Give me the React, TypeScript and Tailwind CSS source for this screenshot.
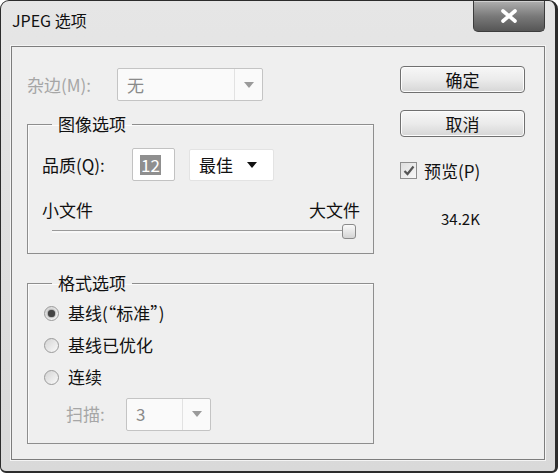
import React from "react";

const font = { fontFamily: '"Noto Sans CJK SC", "Noto Sans", sans-serif' };

function Caret({ gray }: { gray?: boolean }) {
  return (
    <svg width="10" height="6" viewBox="0 0 10 6">
      <path d="M0 0 L10 0 L5 6 Z" fill={gray ? "#9a9a9a" : "#111"} />
    </svg>
  );
}

function DisabledSelect({ value, width, divider }: { value: string; width: string; divider: string }) {
  return (
    <div className={`flex h-[33px] ${width} items-center rounded-[2px] border border-[#c4c4c4] bg-[#fafafa] text-[17px] text-[#8a8a8a]`}>
      <span className={`${divider} pl-[9px]`}>{value}</span>
      <div className="flex h-full flex-1 items-center justify-center border-l border-[#e2e2e2]">
        <Caret gray />
      </div>
    </div>
  );
}

function Radio({ checked, label }: { checked?: boolean; label: string }) {
  return (
    <div className="flex h-[32px] items-center">
      <div className="ml-[16px] flex h-[15px] w-[15px] items-center justify-center rounded-full border border-[#9a9a9a] bg-gradient-to-br from-[#d4d4d4] to-[#fafafa]">
        {checked && <div className="h-[7px] w-[7px] rounded-full bg-[#444] shadow-[0_0_2px_#222]" />}
      </div>
      <span className="ml-[9px] text-[17px] text-[#111]">{label}</span>
    </div>
  );
}

function Btn({ label }: { label: string }) {
  return (
    <button className="flex h-[27px] w-[125px] items-center justify-center rounded-[4px] border border-[#707070] bg-gradient-to-b from-[#f7f7f7] via-[#ebebeb] to-[#d6d6d6] text-[17px] text-[#111] shadow-[inset_0_0_0_1px_#fcfcfc]">
      {label}
    </button>
  );
}

export default function App() {
  return (
    <div style={font} className="h-[473px] w-[558px] bg-white">
      <div className="flex h-[473px] w-[558px] flex-col rounded-t-[9px] rounded-b-[6px] border-t-[1px] border-r-[3px] border-b-[2px] border-l-[1px] border-[#2c2c2c] bg-gradient-to-b from-[#e6e6e6] to-[#d9d9d9]">
        {/* title bar */}
        <div className="flex h-[45px] shrink-0 items-start">
          <div className="mt-[8px] ml-[11px] text-[16px] leading-[22px] text-[#111]">JPEG 选项</div>
          <div className="ml-auto mr-[10px] flex h-[31px] w-[72px] items-center justify-center rounded-b-[5px] border border-t-0 border-[#3c3c3c] bg-gradient-to-b from-[#b0b0b0] via-[#7a7a7a] to-[#565656] shadow-[inset_0_1px_0_#cfcfcf]">
            <svg width="18" height="14" viewBox="0 0 18 14">
              <path d="M3 2 L15 12 M15 2 L3 12" stroke="#fff" strokeWidth="3.6" strokeLinecap="round" />
            </svg>
          </div>
        </div>

        {/* client area */}
        <div className="mx-[10px] flex h-[414px] shrink-0 border border-[#7d7d7d] bg-[#efefef] shadow-[0_0_0_1px_#f4f4f4]">
          {/* left column */}
          <div className="flex w-[362px] flex-col pl-[15px] pt-[21px]">
            <div className="flex h-[33px] items-center">
              <span className="w-[90px] text-[17px] text-[#a6a6a6]">杂边(M):</span>
              <DisabledSelect value="无" width="w-[146px]" divider="w-[116px]" />
            </div>

            <fieldset className="mt-[11px] h-[142px] w-[347px] border border-[#8e8e8e] shadow-[inset_1px_1px_0_#fbfbfb]">
              <legend className="ml-[24px] px-[6px] text-[17px] leading-[24px] text-[#111]">图像选项</legend>
              <div className="mt-[12px] flex h-[33px] items-center">
                <span className="ml-[14px] w-[90px] text-[17px] text-[#111]">品质(Q):</span>
                <div className="flex h-[33px] w-[43px] items-center rounded-[2px] border border-[#c2c2c2] bg-white pl-[7px]">
                  <span className="bg-[#8f8f8f] px-[1px] text-[17px] leading-[20px] text-white">12</span>
                </div>
                <div className="ml-[14px] flex h-[32px] w-[85px] items-center rounded-[2px] border border-[#e3e3e3] bg-white pl-[9px]">
                  <span className="text-[17px] text-[#111]">最佳</span>
                  <span className="ml-[14px]"><Caret /></span>
                </div>
              </div>
              <div className="mt-[17px] flex h-[24px] items-center justify-between pr-[13px] pl-[14px] text-[17px] text-[#111]">
                <span>小文件</span>
                <span>大文件</span>
              </div>
              <div className="flex h-[18px] items-center pl-[24px]">
                <div className="h-[3px] w-[296px] border-t border-[#9a9a9a] bg-[#f8f8f8]" />
                <div className="-ml-[6px] h-[15px] w-[14px] rounded-[3px] border border-[#8a8a8a] bg-gradient-to-b from-[#fafafa] to-[#d4d4d4]" />
              </div>
            </fieldset>

            <fieldset className="mt-[17px] h-[173px] w-[347px] border border-[#8e8e8e] shadow-[inset_1px_1px_0_#fbfbfb]">
              <legend className="ml-[24px] px-[6px] text-[17px] leading-[24px] text-[#111]">格式选项</legend>
              <div className="mt-[2px]">
                <Radio checked label="基线(“标准”)" />
                <Radio label="基线已优化" />
                <Radio label="连续" />
              </div>
              <div className="mt-[4px] flex h-[34px] items-center">
                <span className="ml-[38px] w-[60px] text-[17px] text-[#a6a6a6]">扫描:</span>
                <DisabledSelect value="3" width="w-[85px]" divider="w-[55px]" />
              </div>
            </fieldset>
          </div>

          {/* right column */}
          <div className="ml-[26px] flex flex-col pt-[19px]">
            <Btn label="确定" />
            <div className="mt-[17px]">
              <Btn label="取消" />
            </div>
            <div className="mt-[21px] flex items-center">
              <div className="flex h-[17px] w-[17px] items-center justify-center border border-[#8e8e8e] bg-gradient-to-br from-[#dedede] to-[#f8f8f8]">
                <svg width="12" height="11" viewBox="0 0 12 11">
                  <path d="M1.5 6 L4.5 9 L10.5 1.5" stroke="#555" strokeWidth="2.2" fill="none" />
                </svg>
              </div>
              <span className="ml-[7px] text-[17px] text-[#111]">预览(P)</span>
            </div>
            <div className="mt-[24px] pl-[41px] text-[15px] text-[#111]">34.2K</div>
          </div>
        </div>
      </div>
    </div>
  );
}
